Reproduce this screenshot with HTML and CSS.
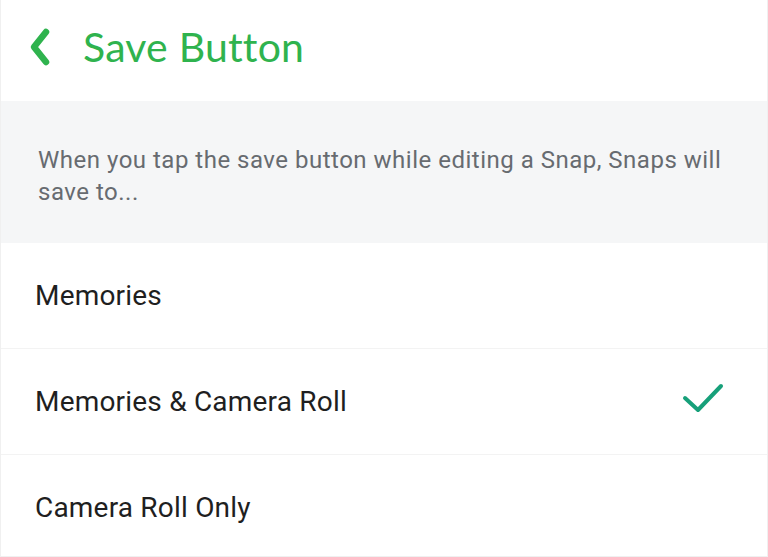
FILE: index.html
```html
<!DOCTYPE html>
<html lang="en">
<head>
  <meta charset="UTF-8">
  <title>Save Button</title>
  <link rel="stylesheet" href="styles.css">
</head>
<body>

  <div class="screen">
    <header class="topbar">
      <svg class="back" width="26" height="40" viewBox="0 0 26 40">
        <path d="M17 5 L5 20 L17 35" fill="none" stroke="#2fb34e" stroke-width="6.5" stroke-linecap="round" stroke-linejoin="round"/>
      </svg>
      <h1>Save Button</h1>
    </header>

    <div class="hint">
      When you tap the save button while editing a Snap, Snaps will save to...
    </div>

    <ul class="options">
      <li class="option">Memories</li>
      <li class="option">
        <span>Memories &amp; Camera Roll</span>
        <svg class="check" width="44" height="32" viewBox="0 0 44 32">
          <path d="M4 15 L17 27 L40 3" fill="none" stroke="#17a07a" stroke-width="4" stroke-linecap="round" stroke-linejoin="round"/>
        </svg>
      </li>
      <li class="option">Camera Roll Only</li>
    </ul>
  </div>

</body>
</html>
```

FILE: styles.css
```css
html, body {
  margin: 0;
  padding: 0;
  background: #fff;
}

.screen {
  width: 768px;
  height: 557px;
  box-sizing: border-box;
  border: 1px solid #f0f0f0;
  border-top: 0;
  overflow: hidden;
}

.topbar {
  height: 101px;
  display: flex;
  align-items: center;
  padding-left: 28px;
  box-sizing: border-box;
}

.back {
  margin-top: -8px;
}

.topbar h1 {
  margin: -9px 0 0 28px;
  font-family: Lato, "Noto Sans", sans-serif;
  font-weight: 400;
  font-size: 41px;
  letter-spacing: 0.2px;
  color: #2fb34e;
}

.hint {
  background: #f5f6f7;
  height: 142px;
  box-sizing: border-box;
  padding: 43px 30px 0 37px;
  font-family: Roboto, "Liberation Sans", sans-serif;
  font-size: 24px;
  letter-spacing: 0.5px;
  line-height: 32px;
  color: #676b70;
}

.options {
  list-style: none;
  margin: 0;
  padding: 0;
}

.option {
  height: 105px;
  display: flex;
  align-items: center;
  justify-content: space-between;
  padding: 0 42px 0 34px;
  border-bottom: 1px solid #f3f3f3;
  font-family: Roboto, "Liberation Sans", sans-serif;
  font-size: 28px;
  letter-spacing: 0.2px;
  color: #1f1f1f;
}

.option:last-child {
  border-bottom: 0;
}

.check {
  margin-top: -6px;
}
```
